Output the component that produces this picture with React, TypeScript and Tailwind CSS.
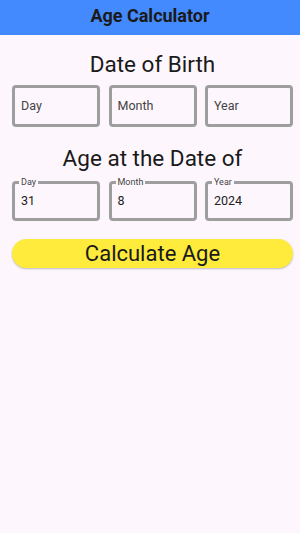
import React from "react";

const font = { fontFamily: "Roboto, 'Noto Sans', sans-serif" };

function PlainBox({ text }: { text: string }) {
  return (
    <div className="h-[42px] w-[88px] rounded-[4px] border-[3px] border-[#9e9e9e] flex items-center pl-[6px]">
      <span className="text-[12.5px] text-[#444]">{text}</span>
    </div>
  );
}

function LabeledBox({ label, value }: { label: string; value: string }) {
  return (
    <div className="relative h-[40px] w-[88px] rounded-[4px] border-[3px] border-[#9e9e9e] flex items-center pl-[6px]">
      <span className="absolute left-[4px] top-[-8px] bg-[#fdf7fd] px-[2px] text-[9px] leading-[12px] text-[#444]">
        {label}
      </span>
      <span className="text-[12.5px] text-[#222] mt-[1px]">{value}</span>
    </div>
  );
}

export default function App() {
  return (
    <div className="min-h-[533px] w-[300px] bg-[#fdf7fd]" style={font}>
      <div className="h-[35px] bg-[#448aff] flex items-center justify-center pb-[5px]">
        <span className="text-[18px] font-bold text-[#1a1a1a]">Age Calculator</span>
      </div>
      <div className="pl-[12px] pr-[7px] flex flex-col">
        <div className="text-center text-[22.5px] leading-[28px] text-[#1a1a1a] mt-[15px]">Date of Birth</div>
        <div className="flex justify-between mt-[7px]">
          <PlainBox text="Day" />
          <PlainBox text="Month" />
          <PlainBox text="Year" />
        </div>
        <div className="text-center text-[22.5px] leading-[28px] text-[#1a1a1a] mt-[17px]">Age at the Date of</div>
        <div className="flex justify-between mt-[9px]">
          <LabeledBox label="Day" value="31" />
          <LabeledBox label="Month" value="8" />
          <LabeledBox label="Year" value="2024" />
        </div>
        <button className="mt-[18px] h-[29px] rounded-full bg-[#ffeb3b] shadow-[0_1px_2px_rgba(0,0,0,0.25)] flex items-center justify-center text-[22px] text-[#1a1a1a]">
          Calculate Age
        </button>
      </div>
    </div>
  );
}
